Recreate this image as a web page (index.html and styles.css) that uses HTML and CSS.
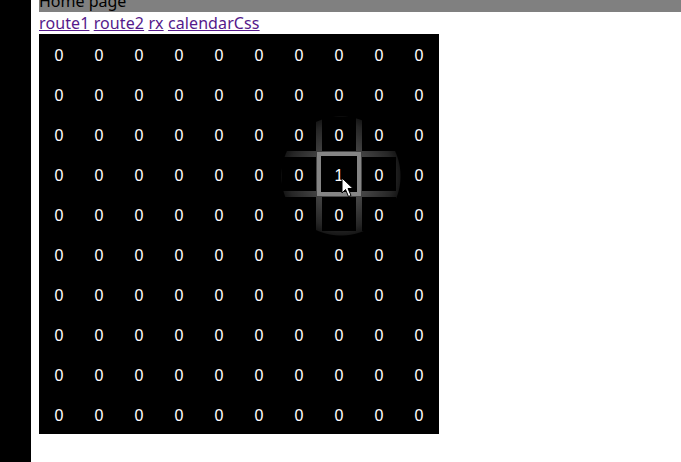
FILE: index.html
```html
<!DOCTYPE html>
<html>
<head>
<meta charset="utf-8">
<link rel="stylesheet" href="styles.css">
</head>
<body>
<div class="side"></div>
<div class="main">
  <div class="header">Home page</div>
  <nav class="links"><a href="#">route1</a> <a href="#">route2</a> <a href="#">rx</a> <a href="#">calendarCss</a></nav>
  <div class="board">
    <div class="grid" id="grid"></div>
    <svg class="cursor" width="14" height="22" viewBox="0 0 14 22"><path d="M1 1 L1 16 L4.5 12.5 L7.5 19.5 L10 18.5 L7 11.5 L12 11.5 Z" fill="#fff" stroke="#000" stroke-width="1"/></svg>
  </div>
</div>
<script>
var g=document.getElementById('grid');
for(var r=0;r<10;r++){for(var c=0;c<10;c++){var d=document.createElement('div');d.className='cell'+(r==3&&c==7?' active':'');d.textContent=(r==3&&c==7)?'1':'0';g.appendChild(d);}}
</script>
</body>
</html>
```
FILE: styles.css
```css
html,body{margin:0;padding:0;}
body{display:flex;min-height:462px;background:#fff;font-family:"Noto Sans","Liberation Sans",sans-serif;font-size:16px;overflow:hidden;}
.side{width:31px;flex:none;background:#000;}
.main{flex:1;padding-left:8px;margin-top:-9px;}
.header{background:#808080;color:#000;line-height:21px;height:21px;}
.links{line-height:22px;height:22px;letter-spacing:.1px;}
.links a{color:#551a8b;}
.board{position:relative;width:400px;}
.grid{display:grid;grid-template-columns:repeat(10,40px);grid-auto-rows:40px;width:400px;
background:#000 radial-gradient(circle 60px at 302px 142px,rgba(255,255,255,.36) 0,rgba(255,255,255,.26) 30px,rgba(255,255,255,.15) 52px,rgba(255,255,255,.09) 59px,transparent 60px);}
.cell{box-sizing:border-box;border:3px solid transparent;padding-top:4px;background:#000;background-clip:padding-box;color:#fff;display:flex;align-items:center;justify-content:center;font-family:"Liberation Sans","Noto Sans",sans-serif;font-size:16px;}
.active{border:2px solid #858585;padding-top:4px;box-shadow:0 0 0 2px #858585;position:relative;z-index:1;}
.cursor{position:absolute;left:302px;top:143px;z-index:2;}
```
